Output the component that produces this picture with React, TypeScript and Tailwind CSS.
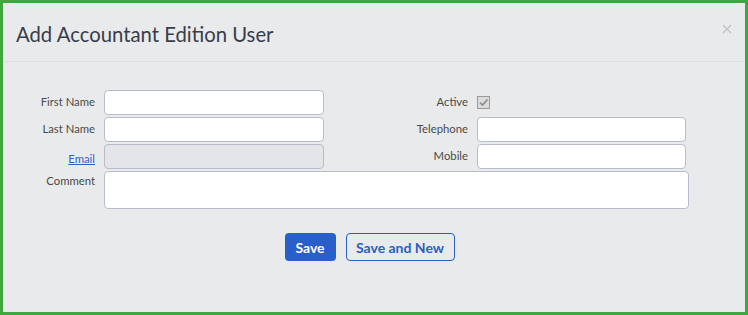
import React from "react";

const labelCls = "text-[11.3px] text-[#4a4a4a] text-right";
const inputCls =
  "h-[25px] rounded-[4px] border border-[#b8bccb] bg-white px-2 text-[12px] outline-none";

export default function App() {
  return (
    <div
      className="w-[748px] h-[315px] border-[3px] border-[#3fa73f] bg-[#e9eaec] flex flex-col"
      style={{ fontFamily: "Lato, 'Open Sans', sans-serif" }}
    >
      <div className="h-[59px] shrink-0 border-b border-[#dcdde0] flex items-center justify-between pl-[13px] pr-[13px]">
        <h2 className="text-[20.3px] text-[#383d49] font-normal pt-[5px]">Add Accountant Edition User</h2>
        <svg width="10" height="10" viewBox="0 0 10 10" className="mt-[-7px]">
          <path d="M1 1 L9 9 M9 1 L1 9" stroke="#c2c2c2" strokeWidth="1.4" />
        </svg>
      </div>

      <div className="pt-[28px] pl-[12px]">
        <div className="grid grid-cols-[80px_220px_135px_209px] gap-x-[9px] gap-y-[2px] items-center">
          <span className={labelCls}>First Name</span>
          <input className={inputCls} />
          <span className={labelCls}>Active</span>
          <div className="flex items-center">
            <span className="w-[13px] h-[13px] border border-[#9a9a9a] bg-[#dcdcdc] flex items-center justify-center">
              <svg width="11" height="11" viewBox="0 0 11 11">
                <path d="M2 5.5 L4.5 8 L9.5 2.5" stroke="#8a8a8a" strokeWidth="1.6" fill="none" />
              </svg>
            </span>
          </div>

          <span className={labelCls}>Last Name</span>
          <input className={inputCls} />
          <span className={labelCls}>Telephone</span>
          <input className={inputCls} />

          <span className="text-right">
            <a href="#" className="text-[11.3px] text-[#2f5fc4] underline">Email</a>
          </span>
          <input className={inputCls} disabled style={{ backgroundColor: "#e4e5e8" }} />
          <span className={labelCls}>Mobile</span>
          <input className={inputCls} />

          <span className={labelCls + " self-start pt-[2px]"}>Comment</span>
          <textarea className="col-span-3 w-[585px] h-[38px] rounded-[4px] border border-[#b8bccb] bg-white resize-none outline-none" />
        </div>

        <div className="flex justify-center gap-[10px] mt-[24px] pr-[21px]">
          <button className="h-[28px] w-[51px] rounded-[4px] bg-[#2a5ec8] text-white text-[14px] font-bold">
            Save
          </button>
          <button className="h-[28px] w-[109px] rounded-[4px] border border-[#2a5ec8] text-[#2a5ec8] text-[14px] font-bold">
            Save and New
          </button>
        </div>
      </div>
    </div>
  );
}
